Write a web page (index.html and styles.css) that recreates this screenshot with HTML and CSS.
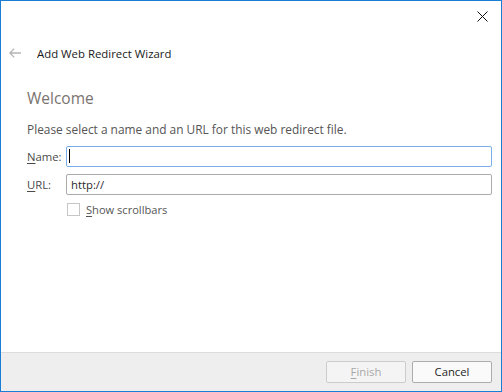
FILE: index.html
```html
<!doctype html>
<html lang="en">
<head>
  <meta charset="utf-8">
  <title>Add Web Redirect Wizard</title>
  <link rel="stylesheet" href="styles.css">
</head>
<body>
<div class="wizardWindow">
  <div class="titleBar">
    <button type="button" class="closeButton" aria-label="Close">
      <svg width="11" height="11" viewBox="0 0 11 11">
        <path d="M0.5 0.5 L10.5 10.5 M10.5 0.5 L0.5 10.5" stroke="#111" stroke-width="1" fill="none"/>
      </svg>
    </button>
  </div>

  <div class="wizardHeader">
    <svg class="backArrow" width="12" height="10" viewBox="0 0 12 10">
      <path d="M0.8 5 H12 M5.2 0.6 L0.8 5 L5.2 9.4" stroke="#b4b4b4" stroke-width="1.3" fill="none"/>
    </svg>
    <span class="wizardHeader__title">Add Web Redirect Wizard</span>
  </div>

  <div class="wizardContent">
    <h1>Welcome</h1>
    <p class="wizardContent__intro">Please select a name and an URL for this web redirect file.</p>

    <div class="formRow">
      <label class="formRow__label" for="name"><u>N</u>ame:</label>
      <div class="textBox textBox--focused"><span class="caret"></span></div>
    </div>
    <div class="formRow">
      <label class="formRow__label" for="url"><u>U</u>RL:</label>
      <div class="textBox">http://</div>
    </div>
    <div class="checkRow">
      <span class="checkBox"></span>
      <span><u>S</u>how scrollbars</span>
    </div>
  </div>

  <div class="wizardFooter">
    <button type="button" class="button button--disabled"><u>F</u>inish</button>
    <button type="button" class="button">Cancel</button>
  </div>
</div>
</body>
</html>
```

FILE: styles.css
```css
body {
  margin: 0;
  font-family: "Segoe UI", "Open Sans", "Noto Sans", sans-serif;
  font-size: 12px;
  background: #ffffff;
}

u {
  text-decoration: underline;
  text-underline-offset: 2px;
}

.wizardWindow {
  box-sizing: border-box;
  width: 502px;
  height: 392px;
  border: 1px solid #1a7fd4;
  display: flex;
  flex-direction: column;
  background: #ffffff;
}

.titleBar {
  height: 29px;
  display: flex;
  justify-content: flex-end;
}

.closeButton {
  width: 30px;
  height: 29px;
  padding: 0;
  border: none;
  background: none;
  display: flex;
  align-items: center;
  justify-content: center;
  margin-right: 4px;
  margin-top: 1px;
}

.wizardHeader {
  height: 46px;
  display: flex;
  align-items: center;
  padding-left: 8px;
}

.backArrow {
  margin-right: 16px;
  margin-top: -1px;
}

.wizardHeader__title {
  color: #1a1a1a;
  font-size: 11.4px;
}

.wizardContent {
  flex: 1;
  padding: 0 9px 0 26px;
}

h1 {
  margin: 10px 0 0 0;
  font-size: 15.5px;
  font-weight: 400;
  color: #7a7470;
  line-height: 24px;
}

.wizardContent__intro {
  margin: 11px 0 9px 0;
  color: #555555;
  line-height: 16px;
  font-size: 11.9px;
}

.formRow {
  display: flex;
  align-items: center;
  height: 20px;
  margin-bottom: 8px;
}

.formRow__label {
  width: 39px;
  color: #4a4a4a;
  font-size: 11.3px;
}

.textBox {
  box-sizing: border-box;
  flex: 1;
  height: 21px;
  border: 1px solid #ababab;
  border-radius: 2px;
  padding: 0 4px;
  display: flex;
  align-items: center;
  color: #2a2a2a;
  font-size: 11.3px;
}

.textBox--focused {
  border-color: #7aaee6;
}

.caret {
  width: 1px;
  height: 14px;
  background: #000000;
  margin-left: -2px;
}

.checkRow {
  display: flex;
  align-items: center;
  margin-left: 40px;
  margin-top: 5px;
  color: #555555;
  font-size: 11.1px;
}

.checkBox {
  box-sizing: border-box;
  width: 13px;
  height: 13px;
  border: 1px solid #c6c6c6;
  margin-right: 6px;
}

.wizardFooter {
  height: 38px;
  border-top: 1px solid #dcdcdc;
  background: #eeeeee;
  display: flex;
  justify-content: flex-end;
  align-items: center;
  gap: 6px;
  padding-right: 9px;
}

.button {
  box-sizing: border-box;
  width: 80px;
  height: 22px;
  border: 1px solid #adadad;
  border-radius: 2px;
  background: #fafafa;
  font-family: inherit;
  font-size: 11.3px;
  color: #262626;
  padding: 0;
  margin-top: -1px;
}

.button--disabled {
  color: #a8a8a8;
  border-color: #cccccc;
  background: #f4f4f4;
}
```
